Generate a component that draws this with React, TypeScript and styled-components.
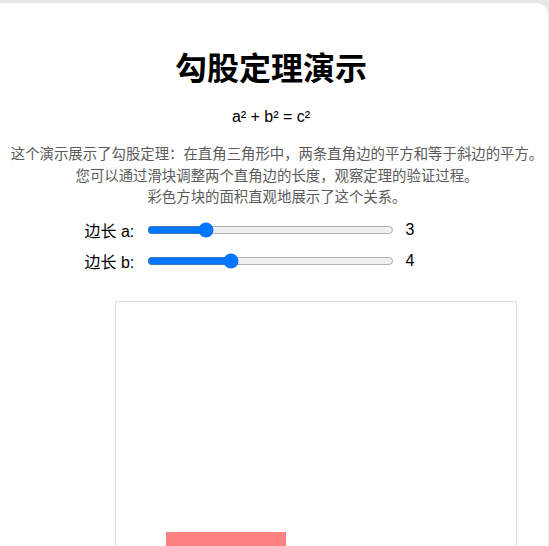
import React, { useState } from "react";
import styled, { createGlobalStyle } from "styled-components";

const Global = createGlobalStyle`
  html, body {
    margin: 0;
    padding: 0;
    background: #e8e8e8;
    overflow: hidden;
  }
  body {
    font-family: "Liberation Sans", Arial, "Noto Sans CJK SC", sans-serif;
  }
`;

const Page = styled.div`
  padding-top: 3px;
  height: 543px;
  overflow: hidden;
`;

const Card = styled.div`
  margin-left: -12px;
  width: 560px;
  min-height: 700px;
  background: #ffffff;
  border-radius: 12px;
  box-sizing: border-box;
  padding-top: 46px;
  padding-left: 6px;
  display: flex;
  flex-direction: column;
  align-items: center;
`;

const Title = styled.h1`
  margin: 0;
  font-size: 32px;
  line-height: 40px;
  font-weight: 700;
  color: #000;
  font-family: "Liberation Sans", Arial, "Noto Sans CJK SC", sans-serif;
`;

const Formula = styled.div`
  margin-top: 18px;
  font-size: 16px;
  line-height: 20px;
  color: #000;
`;

const Description = styled.div`
  margin-top: 17px;
  margin-left: 12px;
  font-size: 14.4px;
  line-height: 21.5px;
  color: #5a5a5a;
  text-align: center;
  font-family: "Liberation Sans", Arial, "Noto Sans CJK SC", sans-serif;
`;

const Controls = styled.div`
  margin-top: 11px;
  display: flex;
  flex-direction: column;
  gap: 11px;
  margin-left: -24px;
`;

const Row = styled.label`
  display: flex;
  align-items: center;
  height: 20px;
  font-size: 16px;
  color: #000;
`;

const LabelText = styled.span`
  width: 58px;
  padding-left: 2px;
  white-space: nowrap;
  font-family: "Liberation Sans", Arial, "Noto Sans CJK SC", sans-serif;
`;

const Slider = styled.input`
  width: 247px;
  margin: 0 12px 0 4px;
  accent-color: #0075ff;
`;

const Value = styled.span`
  width: 30px;
`;

const CanvasFrame = styled.div`
  margin-top: 30px;
  margin-left: 90px;
  width: 400px;
  height: 400px;
  border: 1px solid #dddddd;
  flex-shrink: 0;
`;

export default function App() {
  const [a, setA] = useState(3);
  const [b, setB] = useState(4);
  const scale = 40;
  const ox = 50;
  const oy = 230;
  const aSide = a * scale;
  const bSide = b * scale;
  return (
    <>
      <Global />
      <Page>
        <Card>
          <Title>勾股定理演示</Title>
          <Formula>a² + b² = c²</Formula>
          <Description>
            这个演示展示了勾股定理：在直角三角形中，两条直角边的平方和等于斜边的平方。
            <br />
            您可以通过滑块调整两个直角边的长度，观察定理的验证过程。
            <br />
            彩色方块的面积直观地展示了这个关系。
          </Description>
          <Controls>
            <Row>
              <LabelText>边长 a:</LabelText>
              <Slider
                type="range"
                min={1}
                max={10}
                value={a}
                onChange={(e) => setA(Number(e.target.value))}
              />
              <Value>{a}</Value>
            </Row>
            <Row>
              <LabelText>边长 b:</LabelText>
              <Slider
                type="range"
                min={1}
                max={10}
                value={b}
                onChange={(e) => setB(Number(e.target.value))}
              />
              <Value>{b}</Value>
            </Row>
          </Controls>
          <CanvasFrame>
            <svg width="400" height="400" viewBox="0 0 400 400">
              <rect x={ox} y={oy} width={aSide} height={aSide} fill="#ff8080" />
              <rect x={ox + aSide} y={oy + aSide} width={bSide} height={bSide} fill="#80b0ff" />
            </svg>
          </CanvasFrame>
        </Card>
      </Page>
    </>
  );
}
